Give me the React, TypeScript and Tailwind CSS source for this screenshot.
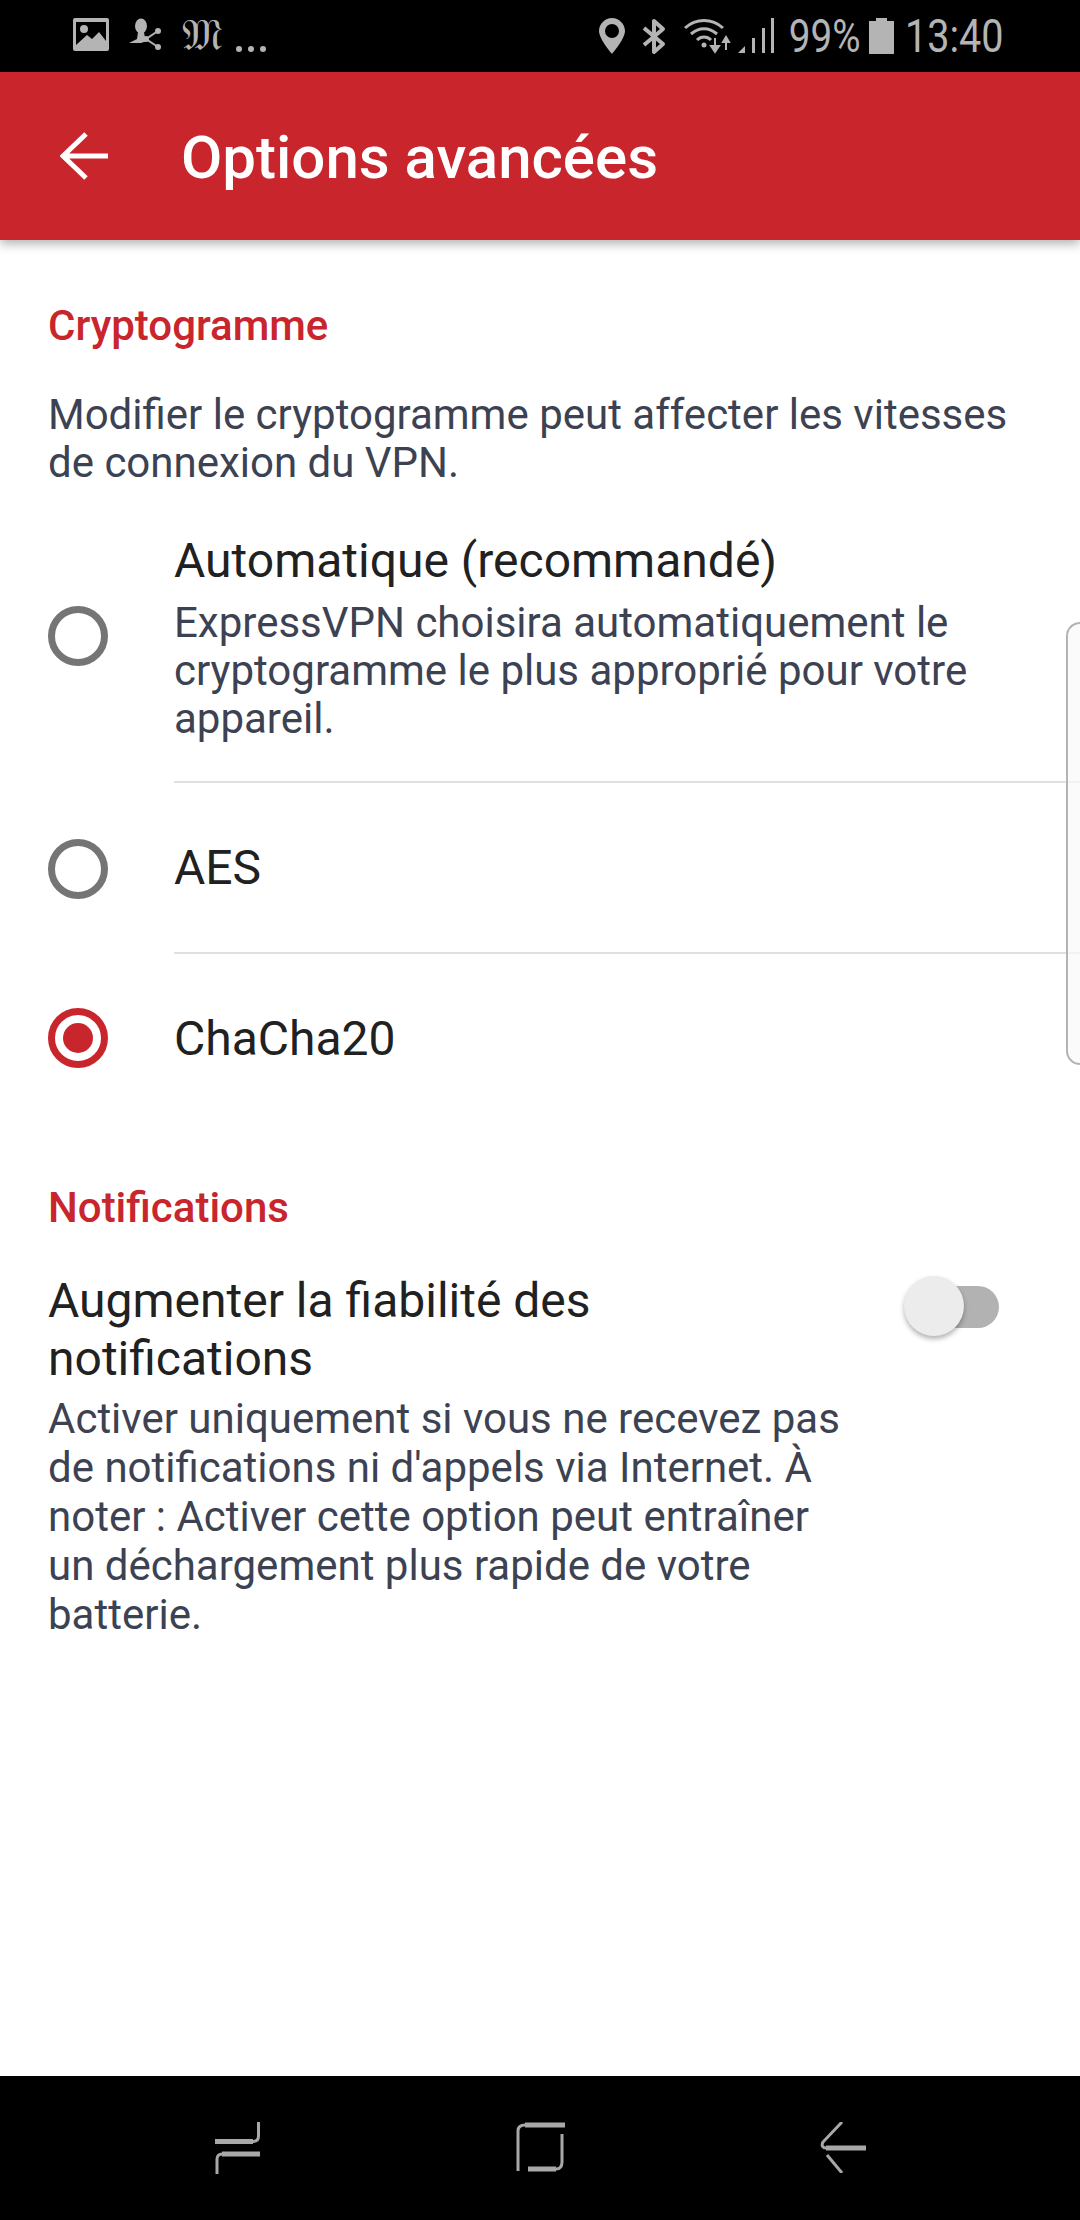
import React from "react";

const RED = "#c8252d";

const Radio = ({ checked }: { checked?: boolean }) => (
  <div
    className={`w-[60px] h-[60px] shrink-0 rounded-full border-[7px] flex items-center justify-center ${
      checked ? "border-[#c8252d]" : "border-[#757575]"
    }`}
  >
    {checked && <div className="w-[30px] h-[30px] rounded-full bg-[#c8252d]" />}
  </div>
);

const StatusBar = () => (
  <div className="h-[72px] bg-black flex items-start pt-[18px] text-[#b4b4b4] font-['Roboto',sans-serif]">
    <svg width="36" height="33" viewBox="0 0 36 33" className="ml-[73px]">
      <rect width="36" height="33" rx="2" fill="#b4b4b4" />
      <path d="M3 4H33V23L26 14L19 21L14 17L3 27Z" fill="#000" />
      <circle cx="11" cy="11" r="4" fill="#b4b4b4" />
    </svg>
    <svg width="32" height="33" viewBox="0 0 32 33" className="ml-[20px]">
      <ellipse cx="12" cy="8" rx="6" ry="7.5" fill="#b4b4b4" />
      <path d="M9 14H15L16 20L18 23L12 25H0L8 21Z" fill="#b4b4b4" />
      <path d="M29 13L17 21L29 29" fill="none" stroke="#b4b4b4" strokeWidth="2" />
      <circle cx="29" cy="13" r="3" fill="#b4b4b4" />
      <circle cx="17" cy="21" r="3" fill="#b4b4b4" />
      <circle cx="29" cy="29" r="3" fill="#b4b4b4" />
    </svg>
    <span className="ml-[21px] w-[34px] h-[33px] text-[44px] leading-[33px] text-center font-['DejaVu_Serif','DejaVu_Sans',serif]">
      𝔐
    </span>
    <svg width="30" height="34" viewBox="0 0 30 34" className="ml-[20px]">
      <circle cx="3" cy="31" r="3" fill="#b4b4b4" />
      <circle cx="15" cy="31" r="3" fill="#b4b4b4" />
      <circle cx="27" cy="31" r="3" fill="#b4b4b4" />
    </svg>
    <svg width="26" height="36" viewBox="0 0 26 36" className="ml-[333px]">
      <path
        fillRule="evenodd"
        d="M13 0C6 0 0 6 0 13C0 21 13 36 13 36S26 21 26 13C26 6 20 0 13 0ZM13 6A7 7 0 1 1 13 20A7 7 0 1 1 13 6Z"
        fill="#b4b4b4"
      />
    </svg>
    <svg width="24" height="37" viewBox="0 0 24 37" className="ml-[17px]">
      <path
        d="M2 10L21 26L12 34V3L21 11L2 27"
        fill="none"
        stroke="#b4b4b4"
        strokeWidth="4"
        strokeLinejoin="round"
      />
    </svg>
    <svg width="48" height="36" viewBox="0 0 48 36" className="ml-[18px]">
      <path d="M1 10C12 0 28 0 39 10" fill="none" stroke="#b4b4b4" strokeWidth="3" />
      <path d="M7 16C15 9 25 9 33 16" fill="none" stroke="#b4b4b4" strokeWidth="3" />
      <path d="M13 22C17 18 23 18 27 22" fill="none" stroke="#b4b4b4" strokeWidth="3" />
      <circle cx="20" cy="27" r="2.5" fill="#b4b4b4" />
      <path d="M31 20V32M27 28L31 34L35 28Z" fill="#b4b4b4" stroke="#b4b4b4" strokeWidth="2" />
      <path d="M42 32V20M39 24L42 19L45 24Z" fill="#b4b4b4" stroke="#b4b4b4" strokeWidth="2" />
    </svg>
    <svg width="36" height="36" viewBox="0 0 36 36" className="ml-[6px]">
      <path d="M0 35L7 28V35Z" fill="#b4b4b4" />
      <rect x="14" y="20" width="3" height="15" fill="#b4b4b4" />
      <rect x="24" y="10" width="3" height="25" fill="#b4b4b4" />
      <rect x="33" y="0" width="3" height="35" fill="#b4b4b4" />
    </svg>
    <div className="ml-[16px] w-[69px] h-[36px] flex items-center justify-center">
      <span className="text-[46px] leading-[36px] font-normal scale-x-[0.84] whitespace-nowrap">99%</span>
    </div>
    <svg width="25" height="36" viewBox="0 0 25 36" className="ml-[10px]">
      <path d="M7 0H18V3H25V36H0V3H7Z" fill="#b4b4b4" />
    </svg>
    <div className="ml-[13px] w-[94px] h-[36px] flex items-center justify-center">
      <span className="text-[46px] leading-[36px] font-normal scale-x-[0.86] whitespace-nowrap">13:40</span>
    </div>
  </div>
);

const NavBar = () => (
  <div className="mt-auto h-[144px] bg-black flex items-start pt-[46px]">
    <svg width="45" height="52" viewBox="0 0 45 52" className="ml-[215px]" fill="none" stroke="#a8a8a8">
      <path d="M43.5 0V14C43.5 18 41 19.5 38 19.5" strokeWidth="3" />
      <path d="M0 19.5H38" strokeWidth="5" />
      <path d="M45 32H7" strokeWidth="5" />
      <path d="M7 32C4 32 2 34 2 37V52" strokeWidth="3" />
    </svg>
    <svg width="49" height="50" viewBox="0 0 49 50" className="ml-[256px]" fill="none" stroke="#a8a8a8">
      <path d="M49 3H9" strokeWidth="5" />
      <path d="M9 3C4 3 2 5 2 9V49" strokeWidth="3" />
      <path d="M46 12V40C46 45 44 47 40 47" strokeWidth="3" />
      <path d="M12 47H40" strokeWidth="5" />
    </svg>
    <svg width="46" height="51" viewBox="0 0 46 51" className="ml-[255px]" fill="none" stroke="#a8a8a8">
      <path d="M22 0L3 20C1 24 3 26 6 26" strokeWidth="3" />
      <path d="M6 26H46" strokeWidth="5" />
      <path d="M7 33L22 51" strokeWidth="3" />
    </svg>
  </div>
);

export default function App() {
  return (
    <div className="relative w-[1080px] min-h-[2220px] bg-white flex flex-col font-['Roboto',sans-serif] overflow-hidden">
      <StatusBar />
      <header className="relative z-10 h-[168px] bg-[#c8252d] shadow-[0_4px_10px_rgba(0,0,0,0.3)] flex items-center text-white">
        <svg width="48" height="48" viewBox="0 0 48 48" className="ml-[60px]" fill="none" stroke="#fff" strokeWidth="5">
          <path d="M48 24H3M26 2L3 24L26 46" />
        </svg>
        <h1 className="ml-[73px] pt-[3px] text-[60px] leading-[64px] font-medium">Options avancées</h1>
      </header>

      <section className="pt-[61px]">
        <h2 className="pl-[48px] text-[42px] leading-[50px] font-medium" style={{ color: RED }}>
          Cryptogramme
        </h2>
        <p className="mt-[40px] pl-[48px] pr-[40px] text-[42px] leading-[48px] text-[#3c4252]">
          Modifier le cryptogramme peut affecter les vitesses de connexion du VPN.
        </p>

        <div className="mt-[4px] pl-[48px] flex items-center h-[292px]">
          <div className="-mt-[2px]">
            <Radio />
          </div>
          <div className="ml-[66px] flex-1 h-full border-b-2 border-[#e0e0e0] pt-[44px]">
            <div className="text-[48px] leading-[52px] text-[#212121]">Automatique (recommandé)</div>
            <p className="mt-[12px] pr-[90px] text-[42px] leading-[48px] text-[#3c4252]">
              ExpressVPN choisira automatiquement le cryptogramme le plus approprié pour votre appareil.
            </p>
          </div>
        </div>
        <div className="pl-[48px] flex items-center h-[171px]">
          <Radio />
          <div className="ml-[66px] flex-1 h-full border-b-2 border-[#e0e0e0] flex items-center text-[48px] text-[#212121]">
            AES
          </div>
        </div>
        <div className="pl-[48px] flex items-center h-[168px]">
          <Radio checked />
          <div className="ml-[66px] pt-[2px] text-[48px] text-[#212121]">ChaCha20</div>
        </div>
      </section>

      <section className="mt-[61px]">
        <h2 className="pl-[48px] text-[42px] leading-[50px] font-medium" style={{ color: RED }}>
          Notifications
        </h2>
        <div className="mt-[39px] pl-[48px] flex items-start justify-between">
          <div className="w-[800px]">
            <div className="text-[48px] leading-[58px] text-[#212121] w-[700px]">
              Augmenter la fiabilité des notifications
            </div>
            <p className="mt-[6px] text-[42px] leading-[49px] text-[#3c4252]">
              Activer uniquement si vous ne recevez pas de notifications ni d'appels via Internet. À noter : Activer cette option peut entraîner un déchargement plus rapide de votre batterie.
            </p>
          </div>
          <div className="relative w-[95px] h-[60px] mt-[4px] mr-[81px]">
            <div className="absolute left-[8px] right-0 top-[10px] h-[42px] rounded-full bg-[#b2b2b2]" />
            <div className="absolute left-0 top-0 w-[60px] h-[60px] rounded-full bg-[#ececec] shadow-[0_3px_5px_rgba(0,0,0,0.3)]" />
          </div>
        </div>
      </section>

      <NavBar />

      {/* edge panel handle */}
      <div className="absolute right-0 top-[622px] w-[14px] h-[443px] bg-[#fafafa]/70 border-l-2 border-y-2 border-[#b4b4b4] rounded-l-[16px]" />
    </div>
  );
}
